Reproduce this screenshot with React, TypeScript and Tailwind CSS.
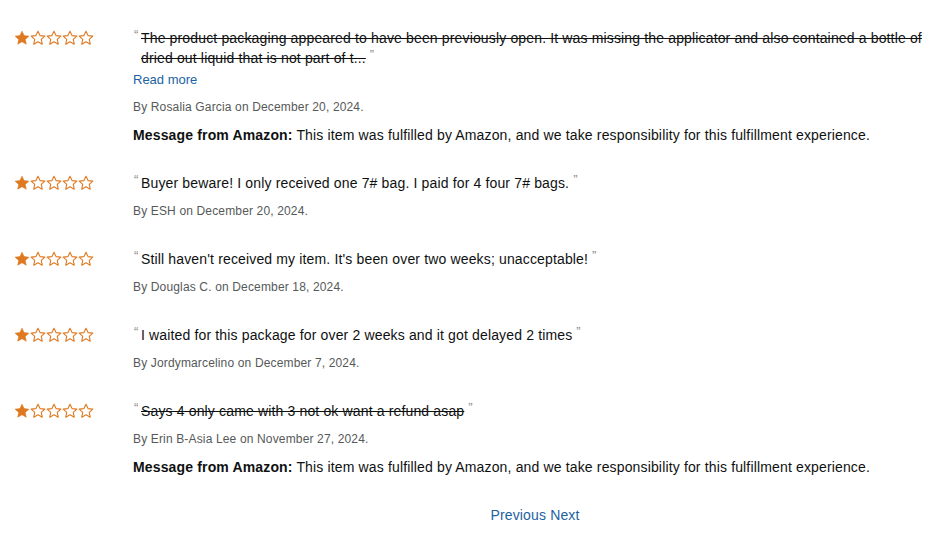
import React from "react";

type Review = {
  text: string;
  struck?: boolean;
  truncated?: boolean;
  author: string;
  date: string;
  message?: boolean;
};

const reviews: Review[] = [
  {
    text: "The product packaging appeared to have been previously open. It was missing the applicator and also contained a bottle of dried out liquid that is not part of t...",
    struck: true,
    truncated: true,
    author: "Rosalia Garcia",
    date: "December 20, 2024",
    message: true,
  },
  {
    text: "Buyer beware! I only received one 7# bag. I paid for 4 four 7# bags.",
    author: "ESH",
    date: "December 20, 2024",
  },
  {
    text: "Still haven't received my item. It's been over two weeks; unacceptable!",
    author: "Douglas C.",
    date: "December 18, 2024",
  },
  {
    text: "I waited for this package for over 2 weeks and it got delayed 2 times",
    author: "Jordymarcelino",
    date: "December 7, 2024",
  },
  {
    text: "Says 4 only came with 3 not ok want a refund asap",
    struck: true,
    author: "Erin B-Asia Lee",
    date: "November 27, 2024",
    message: true,
  },
];

const STAR = "M8 1.2l2.05 4.4 4.8.55-3.57 3.27.98 4.74L8 11.74l-4.26 2.42.98-4.74L1.15 6.15l4.8-.55z";

function Stars({ rating }: { rating: number }) {
  return (
    <div className="flex">
      {[0, 1, 2, 3, 4].map((i) => (
        <svg key={i} width="16" height="16" viewBox="0 0 16 16" aria-hidden>
          <path
            d={STAR}
            fill={i < rating ? "#de7921" : "none"}
            stroke="#de7921"
            strokeWidth={i < rating ? 0.6 : 1.1}
            strokeLinejoin="round"
          />
        </svg>
      ))}
    </div>
  );
}

function ReviewRow({ r }: { r: Review }) {
  return (
    <div className="flex">
      <div className="w-[133px] shrink-0 pl-[14px] pt-[2px]">
        <Stars rating={1} />
      </div>
      <div className="flex-1 pr-[8px]">
        <p className="relative pl-[8px] text-[14px] leading-[20px] tracking-[0.15px] text-[#0f1111]">
          <span className="absolute left-[1px] top-[-3px] text-[13px] leading-[20px] text-[#8c8c8c]">“</span>
          <span className={r.struck ? "line-through" : ""}>{r.text}</span>
          <span className="relative top-[-4px] ml-[4px] text-[13px] leading-[0] text-[#8c8c8c]">”</span>
        </p>
        {r.truncated && (
          <a href="#" className="mt-[2px] block text-[13px] leading-[20px] text-[#2162a1]">
            Read more
          </a>
        )}
        <p
          className={`${
            r.truncated ? "mt-[7px]" : "mt-[8px]"
          } text-[12px] leading-[20px] tracking-[0.15px] text-[#565959]`}
        >
          By {r.author} on {r.date}.
        </p>
        {r.message && (
          <p className="mt-[8px] text-[14px] leading-[20px] tracking-[0.15px] text-[#0f1111]">
            <b className="font-bold">Message from Amazon:</b> This item was fulfilled by Amazon, and we take
            responsibility for this fulfillment experience.
          </p>
        )}
      </div>
    </div>
  );
}

export default function App() {
  return (
    <div
      className="min-h-[536px] w-[935px] bg-white pt-[28px]"
      style={{ fontFamily: '"Liberation Sans", Arial, sans-serif' }}
    >
      <div className="flex flex-col gap-[28px]">
        {reviews.map((r, i) => (
          <ReviewRow key={i} r={r} />
        ))}
        <div className="flex justify-center pl-[135px] text-[14px] leading-[20px] tracking-[0.15px] text-[#2162a1]">
          <a href="#">Previous</a>
          <a href="#" className="ml-[4px]">
            Next
          </a>
        </div>
      </div>
    </div>
  );
}
